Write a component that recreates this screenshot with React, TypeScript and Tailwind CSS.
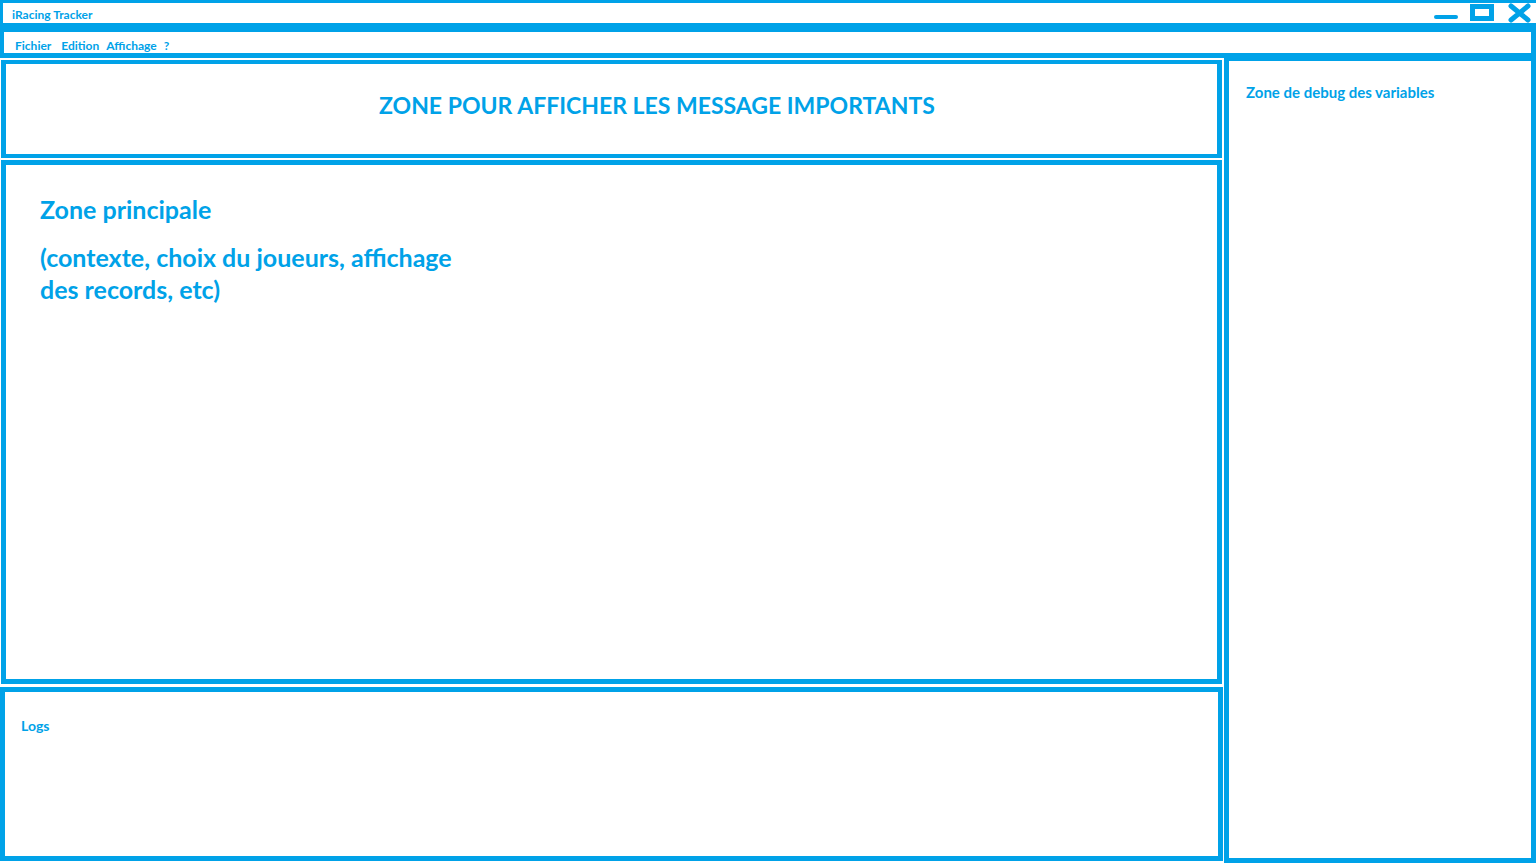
import React from "react";

export default function App() {
  return (
    <div className="w-[1536px] h-[864px] bg-white flex flex-col overflow-hidden text-[#00a2e8] font-['Lato','Open_Sans',sans-serif] font-bold">
      {/* Title bar */}
      <div className="h-[27px] border-t-[3px] border-l-[3px] border-b-[4px] border-[#00a2e8] flex items-center justify-between">
        <div className="pl-[9px] pt-[3px] text-[12px] leading-none">iRacing Tracker</div>
        <div className="flex items-start h-full">
          <svg width="102" height="20" viewBox="0 0 102 20">
            <rect x="0" y="12" width="24" height="4" rx="2" fill="#00a2e8" />
            <rect x="38.5" y="3.5" width="19" height="12" fill="none" stroke="#00a2e8" strokeWidth="5" />
            <path d="M77 3 L94 17 M94 3 L77 17" stroke="#00a2e8" strokeWidth="5" strokeLinecap="round" />
          </svg>
        </div>
      </div>

      {/* Menu bar */}
      <div className="h-[31px] border-t-[5px] border-b-[5px] border-l-[4px] border-r-[5px] border-[#00a2e8] flex items-center">
        <div className="flex gap-[10px] pl-[11px] pt-[7px] text-[12px] leading-none">
          <span>Fichier</span>
          <span>Edition</span>
          <span className="-ml-[3px]">Affichage</span>
          <span className="-ml-[3px]">?</span>
        </div>
      </div>

      {/* Body */}
      <div className="flex flex-1">
        <div className="w-[1223px] flex flex-col">
          <div className="mt-[2px] ml-[1px] w-[1221px] h-[98px] border-[5px] border-t-[4px] border-b-[4px] border-[#00a2e8] pl-[373px] pt-[30px]">
            <div className="text-[23px] leading-none">ZONE POUR AFFICHER LES MESSAGE IMPORTANTS</div>
          </div>
          <div className="mt-[2px] ml-[1px] w-[1221px] h-[524px] border-[5px] border-[#00a2e8] pl-[34px] pt-[30px]">
            <div className="text-[25px] leading-[28px]">Zone principale</div>
            <div className="mt-[18px] text-[25px] leading-[32px] w-[460px]">
              (contexte, choix du joueurs, affichage
              <br />
              des records, etc)
            </div>
          </div>
          <div className="mt-[3px] w-[1223px] h-[174px] border-[5px] border-[#00a2e8] pl-[16px] pt-[27px]">
            <div className="text-[14px] leading-none">Logs</div>
          </div>
        </div>
        <div className="ml-[1px] w-[312px] h-[805px] border-[5px] border-t-[3px] border-[#00a2e8] pl-[17px] pt-[24px]">
          <div className="text-[15px] leading-none">Zone de debug des variables</div>
        </div>
      </div>
    </div>
  );
}
